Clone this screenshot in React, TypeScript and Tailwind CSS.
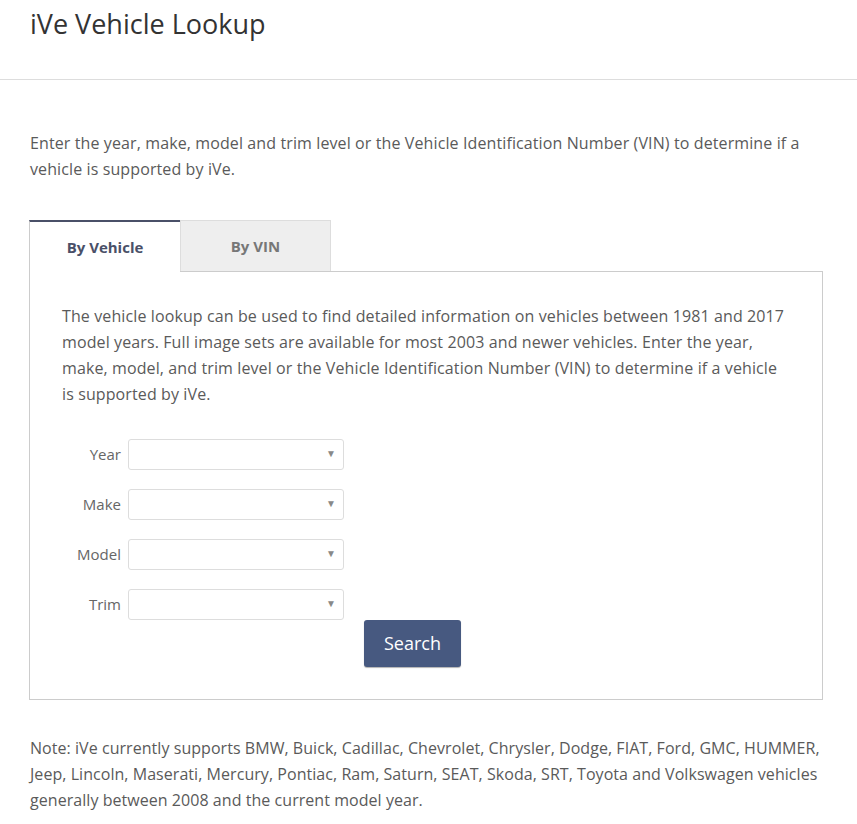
import { useState } from "react";

const years = ["", "2017", "2016", "2015", "2014", "2013", "2012", "2011", "2010", "2009", "2008"];

function SelectRow({ label, options }: { label: string; options: string[] }) {
  return (
    <div className="flex items-center gap-[7px]">
      <label className="w-[59px] text-right text-[15px] text-[#666]">{label}</label>
      <div className="relative w-[216px] h-[31px]">
        <select className="appearance-none w-full h-full border border-[#ddd] rounded-[3px] bg-white px-2 text-[14px] text-[#555] outline-none">
          {options.map((o) => (
            <option key={o} value={o}>
              {o}
            </option>
          ))}
        </select>
        <span className="pointer-events-none absolute right-[8px] top-[7px] text-[10px] text-[#888]">▼</span>
      </div>
    </div>
  );
}

export default function App() {
  const [tab, setTab] = useState<"vehicle" | "vin">("vehicle");

  return (
    <div className="min-h-screen bg-white font-['Open_Sans',sans-serif] text-[#5a5a5a]">
      {/* Header */}
      <div className="h-[80px] border-b border-[#ddd] px-[30px] pt-[4px]">
        <h1 className="text-[27px] leading-[40px] text-[#333]">iVe Vehicle Lookup</h1>
      </div>

      <div className="px-[29px]">
        <p className="mt-[50px] ml-[1px] text-[16px] leading-[26px] tracking-[0.11px] max-w-[790px]">
          Enter the year, make, model and trim level or the Vehicle Identification Number (VIN) to determine if a
          vehicle is supported by iVe.
        </p>

        {/* Tabs */}
        <div className="mt-[38px] w-[794px]">
          <div className="flex">
            <button
              onClick={() => setTab("vehicle")}
              className={
                tab === "vehicle"
                  ? "w-[151px] h-[52px] -mb-px bg-white border-t-2 border-t-[#4a5068] border-l border-l-[#ccc] text-[15px] font-bold text-[#4a5068]"
                  : "w-[151px] h-[51px] bg-[#eee] border border-[#ddd] text-[15px] font-bold text-[#777]"
              }
            >
              By Vehicle
            </button>
            <button
              onClick={() => setTab("vin")}
              className={
                tab === "vin"
                  ? "w-[151px] h-[52px] -mb-px bg-white border-t-2 border-t-[#4a5068] border-x border-x-[#ccc] text-[15px] font-bold text-[#4a5068]"
                  : "w-[151px] h-[51px] bg-[#eee] border border-[#ddd] border-b-0 text-[15px] font-bold text-[#777]"
              }
            >
              By VIN
            </button>
          </div>

          <div className="border border-[#ccc] px-[32px] pt-[31px] pb-[32px]">
            <p className="text-[16px] leading-[26px] tracking-[0.11px] max-w-[728px]">
              The vehicle lookup can be used to find detailed information on vehicles between 1981 and 2017 model
              years. Full image sets are available for most 2003 and newer vehicles. Enter the year, make, model, and
              trim level or the Vehicle Identification Number (VIN) to determine if a vehicle is supported by iVe.
            </p>

            <div className="mt-[32px] flex flex-col gap-[19px]">
              <SelectRow label="Year" options={years} />
              <SelectRow label="Make" options={[""]} />
              <SelectRow label="Model" options={[""]} />
              <SelectRow label="Trim" options={[""]} />
            </div>
            <button className="ml-[302px] w-[97px] h-[47px] rounded-[3px] bg-[#475980] text-white text-[18px] shadow-[0_1px_1px_rgba(0,0,0,0.3)] block">
              Search
            </button>
          </div>
        </div>

        <p className="mt-[35px] ml-[1px] text-[16px] leading-[26px] tracking-[0.05px] max-w-[808px]">
          Note: iVe currently supports BMW, Buick, Cadillac, Chevrolet, Chrysler, Dodge, FIAT, Ford, GMC, HUMMER,
          Jeep, Lincoln, Maserati, Mercury, Pontiac, Ram, Saturn, SEAT, Skoda, SRT, Toyota and Volkswagen vehicles
          generally between 2008 and the current model year.
        </p>
      </div>
    </div>
  );
}
